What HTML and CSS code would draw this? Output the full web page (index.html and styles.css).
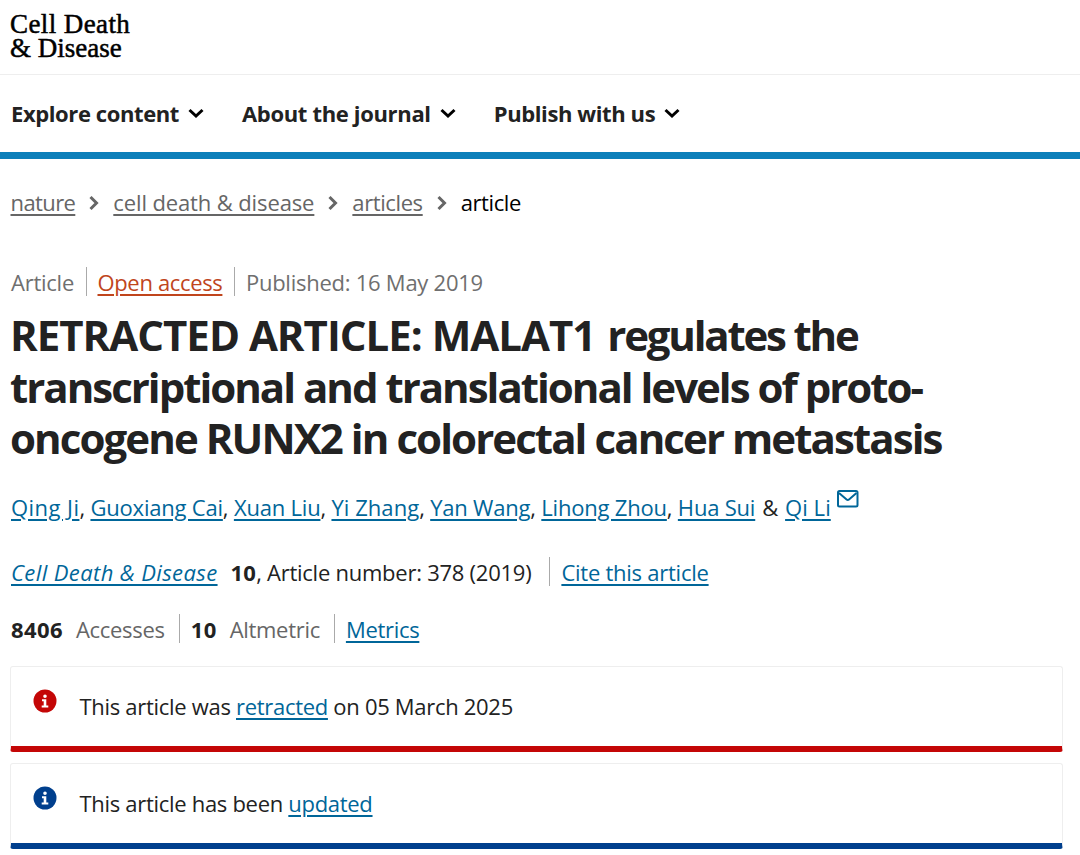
FILE: index.html
```html
<!DOCTYPE html>
<html lang="en">
<head>
    <meta charset="UTF-8">
    <meta name="viewport" content="width=device-width, initial-scale=1.0">
    <title>MALAT1 regulates the transcriptional and translational levels of proto-oncogene RUNX2 | Cell Death &amp; Disease</title>
    <link rel="stylesheet" href="styles.css">
</head>
<body>
    <header class="header">
        <div class="logo"><span class="logo-top">Cell Death</span><br>&amp; Disease</div>
        <nav class="menu">
            <a class="menu-item" href="#"><span>Explore content</span><svg class="chevron" viewBox="0 0 16 16"><path d="M1.500 5l6.500 6 6.500-6"/></svg></a>
            <a class="menu-item about" href="#"><span>About the journal</span><svg class="chevron" viewBox="0 0 16 16"><path d="M1.500 5l6.500 6 6.500-6"/></svg></a>
            <a class="menu-item" href="#"><span>Publish with us</span><svg class="chevron" viewBox="0 0 16 16"><path d="M1.500 5l6.500 6 6.500-6"/></svg></a>
        </nav>
    </header>

    <main class="container">
        <nav class="breadcrumbs">
            <a href="#" class="crumb-home">nature</a>
            <svg class="crumb-arrow" viewBox="0 0 10 16"><path d="M1.500 2l6 6-6 6"/></svg>
            <a href="#" class="crumb-journal">cell death &amp; disease</a>
            <svg class="crumb-arrow" viewBox="0 0 10 16"><path d="M1.500 2l6 6-6 6"/></svg>
            <a href="#">articles</a>
            <svg class="crumb-arrow" viewBox="0 0 10 16"><path d="M1.500 2l6 6-6 6"/></svg>
            <span class="current">article</span>
        </nav>

        <ul class="identifiers">
            <li>Article</li>
            <li><a class="open-access" href="#">Open access</a></li>
            <li>Published: 16 May 2019</li>
        </ul>

        <h1 class="title"><span class="title-caps">RETRACTED ARTICLE: MALAT1</span> <span class="title-tight">regulates the</span> transcriptional and translational levels of proto-<span class="title-end">oncogene RUNX2 in colorectal cancer metastasis</span></h1>

        <p class="authors"><a class="wide" href="#">Qing Ji</a>, <a href="#">Guoxiang Cai</a>, <a href="#">Xuan Liu</a>, <a class="normal" href="#">Yi Zhang</a>, <a href="#">Yan Wang</a>, <a href="#">Lihong Zhou</a>, <a href="#">Hua Sui</a> <span class="amp">&amp;</span> <a class="normal" href="#">Qi Li</a><svg class="mail" viewBox="0 0 22 18"><rect x="1" y="1" width="19.500" height="15.500" rx="1.500"/><path d="M2 3l7.600 6.500q1.200 1 2.400 0L19.500 3"/></svg></p>

        <div class="journal-info">
            <span><a class="journal" href="#"><i>Cell Death &amp; Disease</i></a><b class="volume">10</b>, Article number: 378 (2019)</span>
            <span class="cite"><a href="#">Cite this article</a></span>
        </div>

        <ul class="metrics">
            <li><b>8406</b><span>Accesses</span></li>
            <li><b>10</b><span>Altmetric</span></li>
            <li><a href="#">Metrics</a></li>
        </ul>

        <div class="notice notice-error">
            <svg class="info-icon" viewBox="0 0 24 24"><circle cx="12" cy="12" r="11.500"/><path d="M12 5.500a1.800 1.800 0 1 1 0 3.600 1.800 1.800 0 0 1 0-3.600zM9 10.300h4.300v6.200h2V18.500H8.700v-2h2v-4.200H9z"/></svg>
            <p>This article was <a href="#">retracted</a> on 05 March 2025</p>
        </div>
        <div class="notice notice-info">
            <svg class="info-icon" viewBox="0 0 24 24"><circle cx="12" cy="12" r="11.500"/><path d="M12 5.500a1.800 1.800 0 1 1 0 3.600 1.800 1.800 0 0 1 0-3.600zM9 10.300h4.300v6.200h2V18.500H8.700v-2h2v-4.200H9z"/></svg>
            <p>This article has been <a href="#">updated</a></p>
        </div>
    </main>
</body>
</html>
```
FILE: styles.css
```css
* {
    box-sizing: border-box;
}
body {
    margin: 0;
    background: #fff;
    color: #222;
    font-family: "Open Sans", "Noto Sans", sans-serif;
    font-size: 22px;
    line-height: 32px;
    letter-spacing: -0.3px;
}
a {
    color: #069;
    text-decoration: underline;
    text-decoration-thickness: 2px;
    text-underline-offset: 3px;
}
ul {
    list-style: none;
    margin: 0;
    padding: 0;
}
svg {
    flex: none;
    fill: none;
}
.header {
    border-bottom: 7px solid #0c7fba;
}
.logo {
    height: 75px;
    padding: 12px 10px 0;
    border-bottom: 1px solid #eee;
    color: #000;
    font-family: "Liberation Serif", serif;
    font-size: 27px;
    line-height: 24px;
    letter-spacing: 0;
    -webkit-text-stroke: 0.5px #000;
}
.logo-top {
    letter-spacing: 0.4px;
}
.menu {
    display: flex;
    gap: 38px;
    height: 77px;
    padding: 0 11px 2px;
    align-items: center;
}
.menu-item {
    display: flex;
    align-items: center;
    gap: 9px;
    color: #222;
    font-weight: 700;
    letter-spacing: -0.4px;
    text-decoration: none;
}
.menu .about {
    letter-spacing: -0.33px;
}
.chevron {
    width: 16px;
    height: 16px;
    stroke: #000;
    stroke-width: 3;
}
.container {
    padding: 27px 17px 0 10px;
}
.breadcrumbs {
    display: flex;
    align-items: center;
    gap: 14px;
    padding-left: 0.5px;
    letter-spacing: -0.4px;
}
.breadcrumbs a {
    color: #666;
}
.breadcrumbs .crumb-home {
    letter-spacing: -0.6px;
}
.breadcrumbs .crumb-journal {
    letter-spacing: -0.12px;
}
.breadcrumbs .current {
    color: #000;
}
.crumb-arrow {
    width: 10px;
    height: 16px;
    margin-top: 2px;
    stroke: #666;
    stroke-width: 3;
}
.identifiers {
    display: flex;
    margin-top: 48px;
    padding-left: 1px;
    color: #6f6f6f;
    letter-spacing: -0.25px;
}
.identifiers li + li,
.metrics li + li,
.cite {
    margin-left: 11.5px;
    padding-left: 12px;
    background: linear-gradient(#aaa, #aaa) 0 1px / 1px 29px no-repeat;
}
.identifiers .open-access {
    color: #c0451c;
    letter-spacing: -0.35px;
}
.title {
    margin: 11px 0 0;
    font-size: 42px;
    line-height: 51.5px;
    font-weight: 700;
    letter-spacing: -2px;
}
.title-caps {
    letter-spacing: -1px;
}
.title-tight {
    margin-left: 3px;
    letter-spacing: -2.2px;
}
.title-end {
    display: block;
    letter-spacing: -1.92px;
}
.authors {
    margin: 27px 0 0;
    padding-left: 1px;
    letter-spacing: -0.2px;
}
.authors .wide {
    letter-spacing: 0.45px;
}
.authors .normal {
    letter-spacing: 0.05px;
}
.authors .amp {
    margin: 0 1.5px;
}
.mail {
    width: 22px;
    height: 18px;
    margin-left: 6px;
    margin-top: -8px;
    vertical-align: 8px;
    stroke: #069;
    stroke-width: 2;
}
.journal-info {
    display: flex;
    margin-top: 33px;
    padding-left: 1px;
    letter-spacing: -0.25px;
}
.journal {
    letter-spacing: 0.4px;
}
.volume {
    margin-left: 13px;
    letter-spacing: 0.2px;
}
.journal-info .cite {
    margin-left: 18px;
}
.metrics {
    display: flex;
    margin-top: 25px;
    padding-left: 1px;
    color: #666;
}
.metrics li + li {
    margin-left: 14px;
}
.metrics b {
    margin-right: 13px;
    color: #222;
    letter-spacing: 0.4px;
}
.notice {
    display: flex;
    height: 86px;
    margin-bottom: 11px;
    padding: 22px 22px;
    border: 1px solid #eee;
    border-bottom: 6px solid #c40606;
    border-radius: 3px;
}
.notice p {
    margin: 1px 0 0 22.5px;
}
.metrics + .notice {
    margin-top: 21px;
}
.info-icon {
    width: 24px;
    height: 24px;
}
.info-icon path {
    fill: #fff;
}
.notice-error circle {
    fill: #c40606;
}
.notice-info {
    border-bottom-color: #003f8d;
}
.notice-info circle {
    fill: #003f8d;
}
```
